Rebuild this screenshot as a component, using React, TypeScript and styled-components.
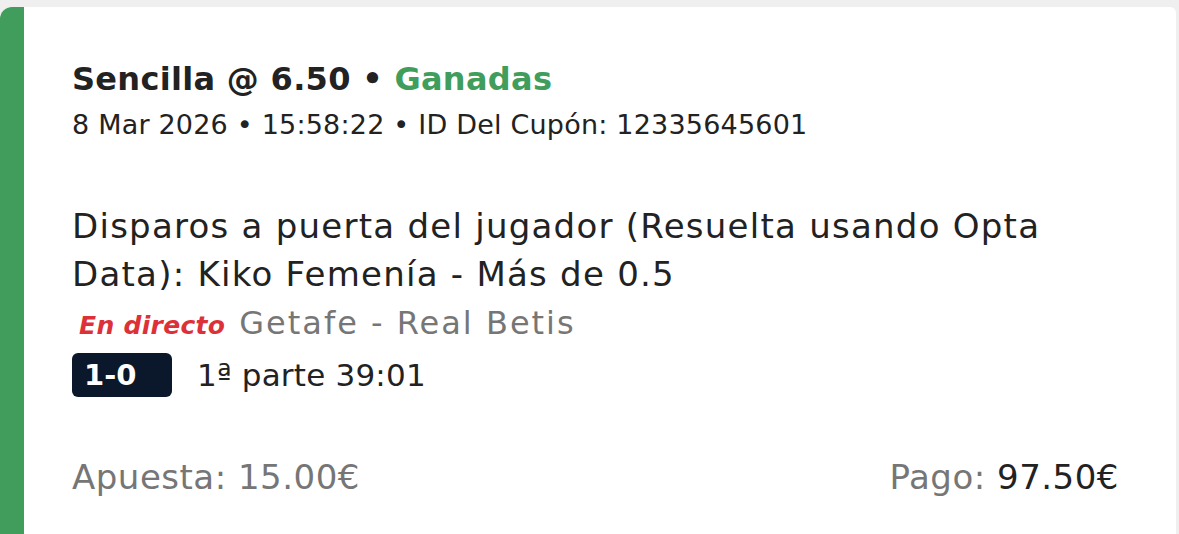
import React from "react";
import styled, { createGlobalStyle } from "styled-components";

const Global = createGlobalStyle`
  html, body { margin: 0; padding: 0; background: #efefef; }
  body { font-family: "DejaVu Sans", "Open Sans", sans-serif; overflow: hidden; }
`;

const Page = styled.div`
  height: 534px;
  padding: 7px 3px 0 0;
  box-sizing: border-box;
`;

const Card = styled.div`
  display: flex;
  height: 560px;
  background: #ffffff;
  border-radius: 12px 6px 0 0;
  overflow: hidden;
`;

const StatusBar = styled.div`
  width: 24px;
  flex: 0 0 24px;
  background: #409d5b;
`;

const Content = styled.div`
  flex: 1;
  padding: 54px 0 0 48px;
  color: #222222;
  display: flex;
  flex-direction: column;
`;

const Title = styled.div`
  font-size: 32px;
  font-weight: 700;
  line-height: 36px;
  letter-spacing: 0.3px;
  color: #222222;
`;

const Won = styled.span`
  color: #409d5b;
`;

const Meta = styled.div`
  margin-top: 11px;
  font-size: 27px;
  line-height: 34px;
  letter-spacing: 0.2px;
  color: #222222;
`;

const Market = styled.div`
  margin-top: 60px;
  font-size: 34px;
  line-height: 48px;
  letter-spacing: 1.25px;
  max-width: 1010px;
`;

const EventRow = styled.div`
  display: flex;
  align-items: baseline;
  gap: 14px;
  margin-top: 5px;
  line-height: 40px;
`;

const Live = styled.span`
  font-size: 25px;
  font-weight: 700;
  font-style: italic;
  letter-spacing: 0.3px;
  color: #dd3139;
  padding-left: 7px;
`;

const Teams = styled.span`
  font-size: 32px;
  letter-spacing: 2px;
  color: #767676;
`;

const ScoreRow = styled.div`
  display: flex;
  align-items: center;
  gap: 25px;
  margin-top: 7px;
`;

const Score = styled.div`
  width: 100px;
  height: 44px;
  box-sizing: border-box;
  padding-left: 12px;
  border-radius: 6px;
  background: #0b172a;
  color: #ffffff;
  font-size: 29px;
  font-weight: 700;
  display: flex;
  align-items: center;
`;

const Period = styled.span`
  font-size: 31px;
  letter-spacing: 0.2px;
  color: #222222;
`;

const Footer = styled.div`
  display: flex;
  justify-content: space-between;
  align-items: baseline;
  margin-top: 60px;
  padding-right: 57px;
  font-size: 34px;
  letter-spacing: 0.5px;
  line-height: 40px;
  color: #767676;
`;

const Amount = styled.span<{ $strong?: boolean }>`
  color: ${(p) => (p.$strong ? "#222222" : "#767676")};
`;

export default function App() {
  return (
    <>
      <Global />
      <Page>
        <Card>
          <StatusBar />
          <Content>
            <Title>
              Sencilla @ 6.50 • <Won>Ganadas</Won>
            </Title>
            <Meta>8 Mar 2026 • 15:58:22 • ID Del Cupón: 12335645601</Meta>
            <Market>
              Disparos a puerta del jugador (Resuelta usando Opta Data): Kiko Femenía - Más de 0.5
            </Market>
            <EventRow>
              <Live>En directo</Live>
              <Teams>Getafe - Real Betis</Teams>
            </EventRow>
            <ScoreRow>
              <Score>1-0</Score>
              <Period>1ª parte 39:01</Period>
            </ScoreRow>
            <Footer>
              <Amount>Apuesta: 15.00€</Amount>
              <span>
                Pago: <Amount $strong>97.50€</Amount>
              </span>
            </Footer>
          </Content>
        </Card>
      </Page>
    </>
  );
}
